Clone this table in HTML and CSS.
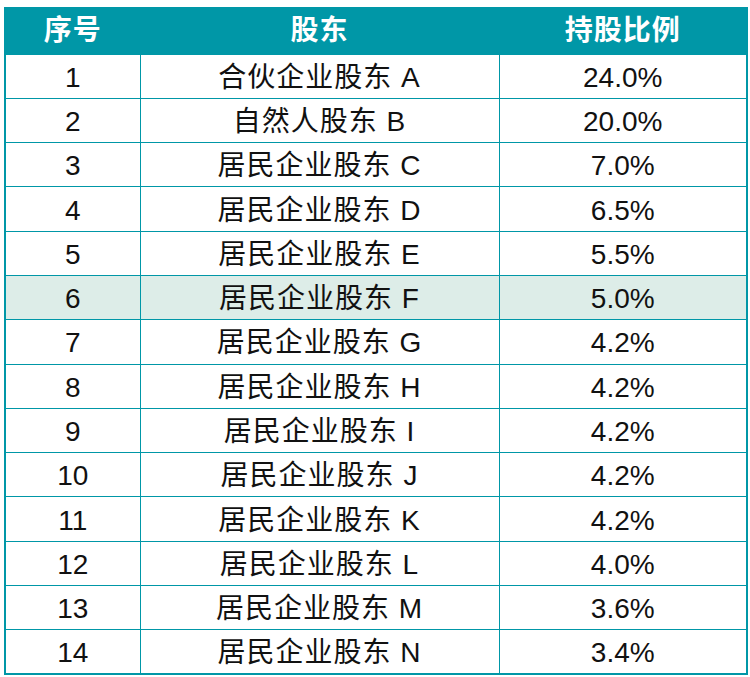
FILE: index.html
```html
<!DOCTYPE html>
<html lang="zh">
<head>
<meta charset="utf-8">
<link rel="stylesheet" href="styles.css">
</head>
<body>
<table class="holders">
  <colgroup>
    <col class="c1"><col class="c2"><col class="c3">
  </colgroup>
  <thead>
    <tr><th>序号</th><th>股东</th><th>持股比例</th></tr>
  </thead>
  <tbody>
    <tr><td>1</td><td class="name">合伙企业股东 A</td><td>24.0%</td></tr>
    <tr><td>2</td><td class="name">自然人股东 B</td><td>20.0%</td></tr>
    <tr><td>3</td><td class="name">居民企业股东 C</td><td>7.0%</td></tr>
    <tr><td>4</td><td class="name">居民企业股东 D</td><td>6.5%</td></tr>
    <tr><td>5</td><td class="name">居民企业股东 E</td><td>5.5%</td></tr>
    <tr class="hl"><td>6</td><td class="name">居民企业股东 F</td><td>5.0%</td></tr>
    <tr><td>7</td><td class="name">居民企业股东 G</td><td>4.2%</td></tr>
    <tr><td>8</td><td class="name">居民企业股东 H</td><td>4.2%</td></tr>
    <tr><td>9</td><td class="name">居民企业股东 I</td><td>4.2%</td></tr>
    <tr><td>10</td><td class="name">居民企业股东 J</td><td>4.2%</td></tr>
    <tr><td>11</td><td class="name">居民企业股东 K</td><td>4.2%</td></tr>
    <tr><td>12</td><td class="name">居民企业股东 L</td><td>4.0%</td></tr>
    <tr><td>13</td><td class="name">居民企业股东 M</td><td>3.6%</td></tr>
    <tr><td>14</td><td class="name">居民企业股东 N</td><td>3.4%</td></tr>
  </tbody>
</table>
</body>
</html>
```
FILE: styles.css
```css
html, body {
  margin: 0;
  background: #ffffff;
}
body {
  padding: 7px 4px 0 4px;
  font-family: "Liberation Sans", "Noto Sans CJK SC", sans-serif;
}
.holders {
  width: 742px;
  border-collapse: collapse;
  table-layout: fixed;
  border: 2px solid #0097a7;
}
.c1 { width: 135px; }
.c2 { width: 359px; }
.c3 { width: 248px; }
.holders th {
  background: #0097a7;
  color: #ffffff;
  font-weight: bold;
  font-size: 28px;
  height: 44.5px;
  padding: 0;
  text-align: center;
  border: 1px solid #0097a7;
  letter-spacing: 1px;
  line-height: 1;
}
.holders td {
  height: 44.3px;
  padding: 3px 0 0 0;
  box-sizing: border-box;
  text-align: center;
  font-size: 28px;
  color: #111111;
  border: 1px solid #0097a7;
  line-height: 1;
}
.holders td.name {
  letter-spacing: 1px;
}
.holders tr.hl td {
  background: #ddede8;
}
```
